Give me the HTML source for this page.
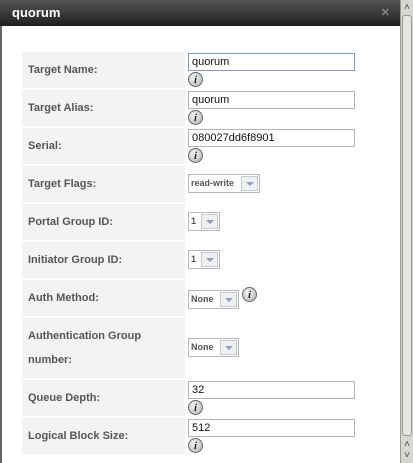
<!DOCTYPE html><html><head><style>
body{margin:0;width:413px;height:463px;overflow:hidden;background:#fff;font-family:"Liberation Sans",sans-serif;position:relative}
.title{position:absolute;left:0;top:0;width:400px;height:26px;background:linear-gradient(#555,#1e1e1e);color:#fff;font-weight:bold;font-size:13px;line-height:26px;padding-left:12px;box-sizing:border-box}
.x{position:absolute;right:10px;top:0;color:#888;font-size:11px;font-weight:bold}
.lb{position:absolute;left:0;top:26px;width:2px;height:437px;background:#666}
.sb{position:absolute;left:400px;top:0;width:13px;height:463px;background:#d8d6d3;border-left:1px solid #999;box-sizing:border-box}
.th{position:absolute;left:1px;top:15px;width:10px;height:421px;background:#e6e4e1;border:1px solid #9a9894;border-radius:3px;box-sizing:border-box}
.ar{position:absolute;left:401px;width:12px;font-size:10px;color:#444;text-align:center;line-height:10px}
.row{position:absolute;left:22px;width:163px;background:#f3f3f3;color:#555;font-weight:bold;font-size:11px;box-sizing:border-box;padding-left:6px}
.inp{position:absolute;left:188px;width:167px;height:18px;border:1px solid #aab4c4;box-sizing:border-box;font-size:11px;line-height:16px;padding-left:3px;color:#111}
.i{position:absolute;width:15px;height:15px;border-radius:50%;background:radial-gradient(circle at 40% 35%,#fafafa,#aaa);border:1px solid #666;box-sizing:border-box;font:italic bold 11px "Liberation Serif",serif;text-align:center;line-height:14px;color:#222}
.sel{position:absolute;left:188px;height:19px;border:1px solid #b4b8c4;box-sizing:border-box;font-size:9px;font-weight:bold;color:#555;line-height:17px;padding-left:2px;background:#fff}
.sel b{position:absolute;right:1px;top:1px;width:17px;height:15px;border:1px solid #c4c8d0;box-sizing:border-box;background:#f0f0f0}
.sel b:after{content:"";position:absolute;left:4px;top:5px;border:4px solid transparent;border-top:4px solid #8aa0c8;border-bottom:0}
</style></head><body>
<div class="title">quorum<span class="x">✕</span></div>
<div class="lb"></div>
<div class="sb"><div class="th"></div></div>
<div class="ar" style="top:3px">&#x2C4;</div>
<div class="ar" style="top:440px">&#x2C4;</div>
<div class="ar" style="top:451px">&#x2C5;</div>
<div class="row" style="top:52px;height:36px;line-height:36px">Target Name:</div>
<div class="inp" style="top:53px;border-color:#7a9cc8">quorum</div><div class="i" style="left:188px;top:72px">i</div>
<div class="row" style="top:90px;height:36px;line-height:36px">Target Alias:</div>
<div class="inp" style="top:91px">quorum</div><div class="i" style="left:188px;top:110px">i</div>
<div class="row" style="top:128px;height:36px;line-height:36px">Serial:</div>
<div class="inp" style="top:129px">080027dd6f8901</div><div class="i" style="left:188px;top:148px">i</div>
<div class="row" style="top:166px;height:36px;line-height:36px">Target Flags:</div>
<div class="sel" style="top:174px;width:72px">read-write<b></b></div>
<div class="row" style="top:204px;height:36px;line-height:36px">Portal Group ID:</div>
<div class="sel" style="top:212px;width:32px">1<b></b></div>
<div class="row" style="top:242px;height:36px;line-height:36px">Initiator Group ID:</div>
<div class="sel" style="top:250px;width:32px">1<b></b></div>
<div class="row" style="top:280px;height:36px;line-height:36px">Auth Method:</div>
<div class="sel" style="top:290px;width:51px">None<b></b></div><div class="i" style="left:242px;top:287px">i</div>
<div class="row" style="top:318px;height:60px;line-height:24px;padding-top:6px">Authentication Group<br>number:</div>
<div class="sel" style="top:338px;width:51px">None<b></b></div>
<div class="row" style="top:380px;height:36px;line-height:36px">Queue Depth:</div>
<div class="inp" style="top:381px">32</div><div class="i" style="left:188px;top:400px">i</div>
<div class="row" style="top:418px;height:36px;line-height:36px">Logical Block Size:</div>
<div class="inp" style="top:419px">512</div><div class="i" style="left:188px;top:438px">i</div>
</body></html>
